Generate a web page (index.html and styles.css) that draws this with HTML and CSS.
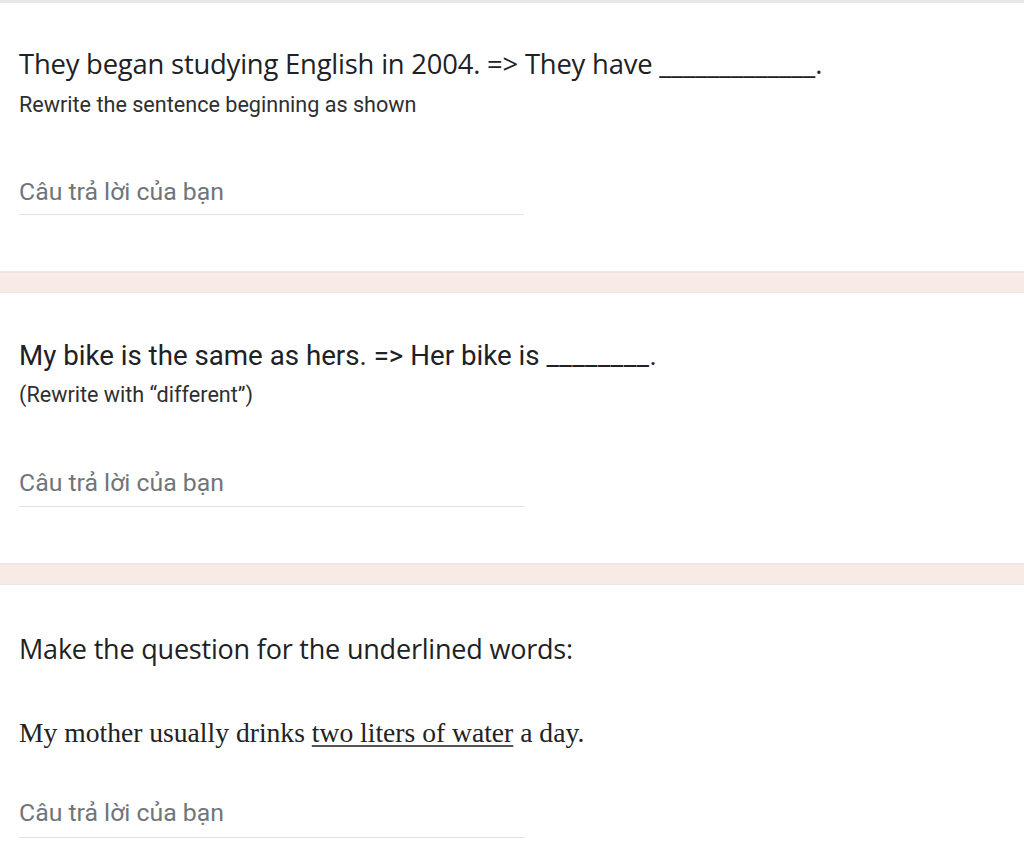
FILE: index.html
```html
<!DOCTYPE html>
<html>
<head>
<meta charset="utf-8">
<link rel="stylesheet" href="styles.css">
</head>
<body>
<div class="topline"></div>
<section class="card card-1">
  <div class="title sans-g">They began studying English in 2004. =&gt; They have <span class="blank blank-1">_____________</span>.</div>
  <div class="desc">Rewrite the sentence beginning as shown</div>
  <div class="answer"><span class="placeholder">Câu trả lời của bạn</span></div>
</section>
<div class="band"></div>
<section class="card card-2">
  <div class="title sans-r">My bike is the same as hers. =&gt; Her bike is <span class="blank blank-2">________</span>.</div>
  <div class="desc desc-2">(Rewrite with “different”)</div>
  <div class="answer answer-2"><span class="placeholder">Câu trả lời của bạn</span></div>
</section>
<div class="band"></div>
<section class="card card-3">
  <div class="title sans-g title-3">Make the question for the underlined words:</div>
  <div class="serif-line">My mother usually drinks <u>two liters of water</u> a day<span class="dot">.</span></div>
  <div class="answer answer-3"><span class="placeholder">Câu trả lời của bạn</span></div>
</section>
</body>
</html>
```
FILE: styles.css
```css
html, body {
  margin: 0;
  padding: 0;
  background: #ffffff;
}
body {
  width: 1024px;
  height: 864px;
  overflow: hidden;
  font-family: Roboto, "Liberation Sans", sans-serif;
  color: #202124;
}
.topline {
  height: 3px;
  background: #e8e8e8;
}
.card {
  background: #ffffff;
  padding: 0 19px;
  box-sizing: border-box;
}
.card-1 { height: 268px; padding-top: 43px; }
.card-2 { height: 270px; padding-top: 45px; }
.card-3 { height: 279px; padding-top: 46px; }
.band {
  height: 22px;
  box-sizing: border-box;
  background: #f8ebe5;
  border-top: 2px solid #ebe6e3;
  border-bottom: 1px solid #ece7e4;
}
.title {
  line-height: 36px;
  color: #202124;
  white-space: nowrap;
}
.sans-g {
  font-family: "Open Sans", Roboto, sans-serif;
  font-size: 27.4px;
  letter-spacing: -0.2px;
}
.title-3 {
  font-size: 27px;
}
.sans-r {
  font-family: Roboto, "Liberation Sans", sans-serif;
  font-size: 27.7px;
}
.blank {
  letter-spacing: 0;
}
.blank-2 {
  letter-spacing: 0.4px;
}
.desc {
  margin-top: 10px;
  font-size: 21.6px;
  line-height: 26px;
  color: #2d2f31;
}
.desc-2 {
  margin-top: 8px;
}
.answer {
  width: 505px;
  margin-top: 60px;
  padding-bottom: 8px;
  border-bottom: 1px solid #e3e3e3;
  font-size: 24.8px;
  line-height: 28px;
}
.answer-2 {
  margin-top: 61px;
  padding-bottom: 9px;
}
.placeholder {
  color: #70757a;
}
.serif-line {
  margin-top: 50px;
  font-family: "Liberation Serif", "Times New Roman", serif;
  font-size: 27.6px;
  line-height: 32px;
  color: #222222;
}
.serif-line u {
  text-underline-offset: 3px;
  text-decoration-color: #555555;
}
.answer-3 {
  margin-top: 50px;
  padding-bottom: 10px;
}
```
